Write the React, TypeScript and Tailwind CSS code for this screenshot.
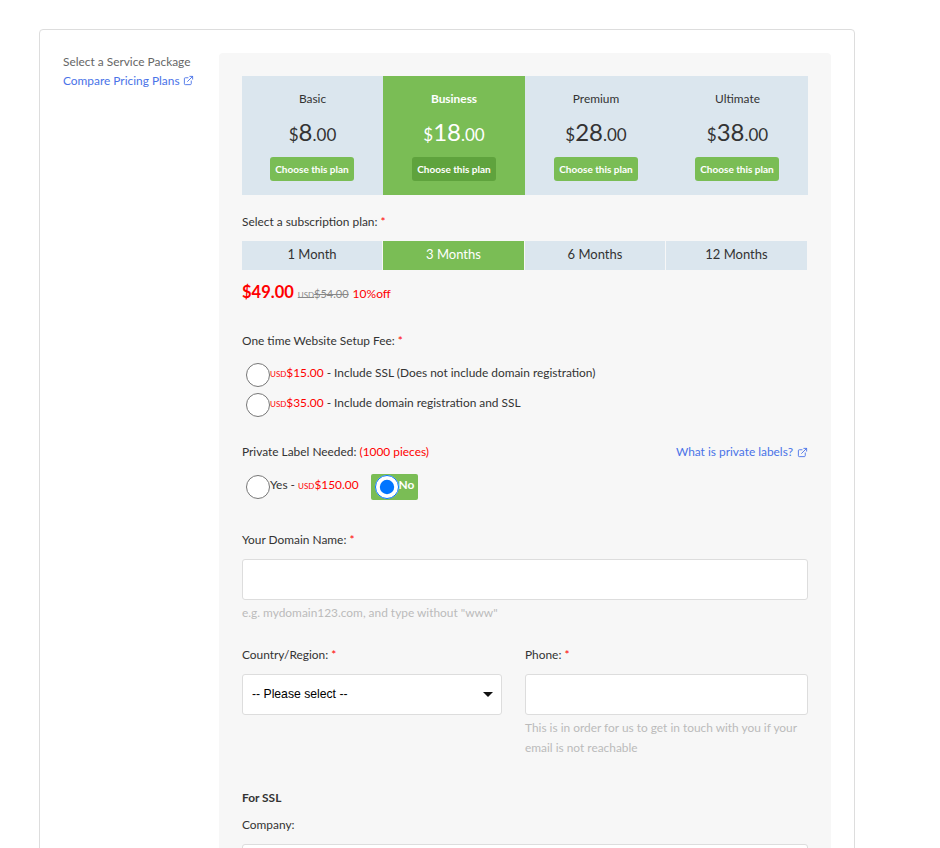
import { ExternalLink } from "lucide-react";

const plans = [
  { name: "Basic", price: "8" },
  { name: "Business", price: "18", active: true },
  { name: "Premium", price: "28" },
  { name: "Ultimate", price: "38" },
];

const terms = [
  { label: "1 Month" },
  { label: "3 Months", active: true },
  { label: "6 Months" },
  { label: "12 Months" },
];

function Required() {
  return <span className="text-[#ff0000]"> *</span>;
}

function Usd() {
  return <span className="text-[8px] uppercase">usd</span>;
}

export default function App() {
  return (
    <div className="h-[848px] overflow-hidden bg-white pt-[29px] pl-[39px] font-['Lato',sans-serif] text-[11.9px] text-[#333]">
      <div className="flex h-[900px] w-[816px] items-start rounded-t border border-[#ddd] pt-[23px] pl-[23px]">
        <div className="-mt-[1px] w-[156px] shrink-0 leading-[19px]">
          <div className="text-[#666]">Select a Service Package</div>
          <a className="flex items-center gap-[3px] text-[#4a73e8]">
            Compare Pricing Plans <ExternalLink className="h-[11px] w-[11px]" />
          </a>
        </div>

        <div className="w-[612px] shrink-0 rounded-t bg-[#f7f7f7] px-[23px] pt-[23px] pb-[40px]">
          <div className="grid w-[566px] grid-cols-[141px_142px_142px_141px]">
            {plans.map((p, i) => (
              <div
                key={p.name}
                className={`flex h-[119px] flex-col items-center pt-[15px] ${p.active ? "bg-[#7abd55] text-white" : "bg-[#dbe6ee]"}`}
              >
                <div className={`leading-[16px] ${p.active ? "font-bold" : ""}`}>{p.name}</div>
                <div className="mt-[8px] h-[34px] leading-[34px]">
                  <span className="text-[17px]">$</span>
                  <span className="text-[24px]">{p.price}</span>
                  <span className="text-[17px]">.00</span>
                </div>
                <button
                  className={`mt-[8px] h-[24px] w-[84px] rounded-[3px] text-center text-[10px] font-bold text-white ${p.active ? "bg-[#5fa33d]" : "bg-[#7abd55]"} ${i % 3 === 0 ? "mr-px" : ""}`}
                >
                  Choose this plan
                </button>
              </div>
            ))}
          </div>

          <div className="mt-[19px] leading-[16px]">
            Select a subscription plan:
            <Required />
          </div>
          <div className="mt-[11px] grid w-[565px] grid-cols-[140px_141px_140px_141px] gap-x-px">
            {terms.map((t) => (
              <div
                key={t.label}
                className={`h-[29px] text-center text-[13px] leading-[27px] ${t.active ? "bg-[#7abd55] text-white" : "bg-[#dbe6ee]"}`}
              >
                {t.label}
              </div>
            ))}
          </div>
          <div className="mt-[11px] flex items-baseline gap-[4px] leading-[23px]">
            <span className="text-[16.5px] font-bold text-[#ff0000]">$49.00</span>
            <span className="text-[11px] text-[#888] line-through">
              <Usd />
              $54.00
            </span>
            <span className="text-[12px] text-[#ff0000]">10%off</span>
          </div>

          <div className="mt-[26px] leading-[16px]">
            One time Website Setup Fee:
            <Required />
          </div>
          <div className="mt-[11px] flex h-[30px] items-center">
            <input type="radio" name="setup" className="ml-[4px] h-[24px] w-[24px]" />
            <span className="-mt-[4px]">
              <span className="text-[#ff0000]">
                <Usd />
                $15.00
              </span>{" "}
              - Include SSL (Does not include domain registration)
            </span>
          </div>
          <div className="flex h-[30px] items-center">
            <input type="radio" name="setup" className="ml-[4px] h-[24px] w-[24px]" />
            <span className="-mt-[4px]">
              <span className="text-[#ff0000]">
                <Usd />
                $35.00
              </span>{" "}
              - Include domain registration and SSL
            </span>
          </div>

          <div className="mt-[24px] flex justify-between leading-[16px]">
            <div>
              Private Label Needed: <span className="text-[#ff0000]">(1000 pieces)</span>
            </div>
            <a className="flex items-center gap-[4px] text-[#4a73e8]">
              What is private labels? <ExternalLink className="h-[11px] w-[11px]" />
            </a>
          </div>
          <div className="mt-[14px] flex h-[26px] items-center">
            <input type="radio" name="label" className="ml-[4px] h-[24px] w-[24px]" />
            <span className="-mt-[5px]">
              Yes - <span className="text-[#ff0000]"><Usd />$150.00</span>
            </span>
            <div className="ml-[12px] flex h-[26px] items-center rounded-[2px] bg-[#7abd55] pr-[4px] font-bold text-white">
              <input type="radio" name="label" defaultChecked className="ml-[4px] h-[24px] w-[24px]" />
              <span className="-mt-[5px]">No</span>
            </div>
          </div>

          <div className="mt-[32px] leading-[16px]">
            Your Domain Name:
            <Required />
          </div>
          <input className="mt-[11px] block h-[41px] w-[566px] rounded-[3px] border border-[#ddd] bg-white" />
          <div className="mt-[3px] leading-[20px] text-[#bbb]">e.g. mydomain123.com, and type without "www"</div>

          <div className="mt-[24px] flex gap-[23px]">
            <div className="w-[260px]">
              <div className="leading-[16px]">
                Country/Region:
                <Required />
              </div>
              <div className="relative mt-[11px] h-[41px] w-[260px]">
                <select className="block h-[41px] w-[260px] appearance-none rounded-[3px] border border-[#ddd] bg-white pl-[9px] font-['Liberation_Sans',sans-serif] text-[12.2px] text-black">
                  <option>-- Please select --</option>
                </select>
                <svg className="absolute top-[18px] right-[9px] h-[5px] w-[10px]" viewBox="0 0 10 5">
                  <polygon points="0,0 10,0 5,5" fill="#111" />
                </svg>
              </div>
            </div>
            <div className="w-[283px]">
              <div className="leading-[16px]">
                Phone:
                <Required />
              </div>
              <input className="mt-[11px] block h-[41px] w-[283px] rounded-[3px] border border-[#ddd] bg-white" />
              <div className="mt-[3px] leading-[20px] text-[#bbb]">
                This is in order for us to get in touch with you if your email is not reachable
              </div>
            </div>
          </div>

          <div className="mt-[32px] leading-[16px] font-bold">For SSL</div>
          <div className="mt-[11px] leading-[16px]">Company:</div>
          <input className="mt-[11px] block h-[41px] w-[566px] rounded-[3px] border border-[#ddd] bg-white" />
        </div>
      </div>
    </div>
  );
}
